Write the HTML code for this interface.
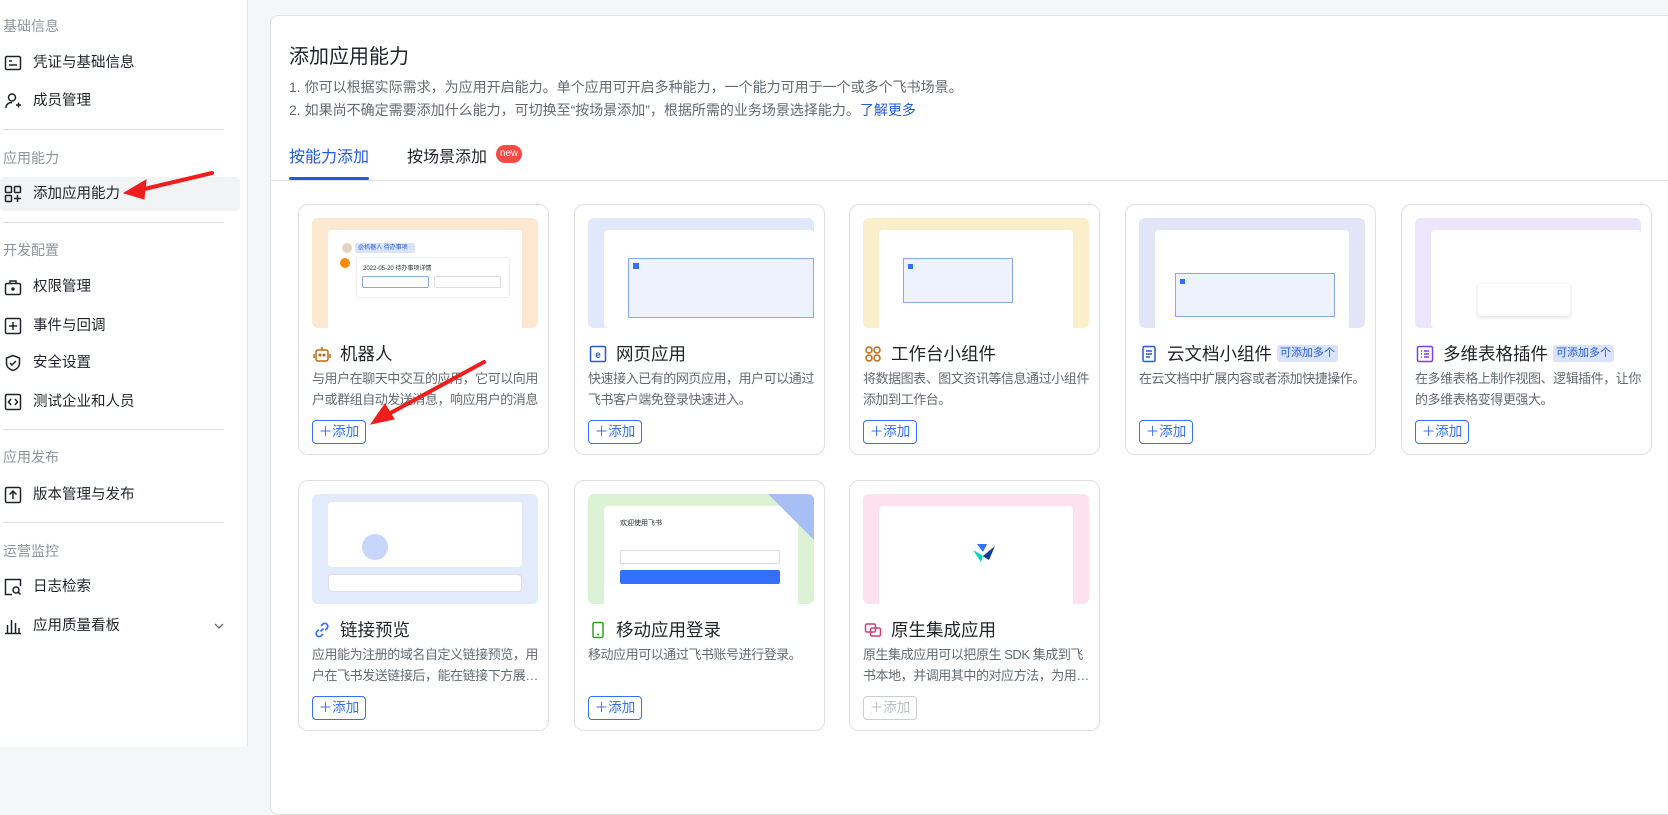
<!DOCTYPE html>
<html><head><meta charset="utf-8">
<style>
*{margin:0;padding:0;box-sizing:border-box}
body{width:1668px;height:747px;overflow:hidden;background:#f5f6f7;font-family:"Liberation Sans","Noto Sans CJK SC",sans-serif;color:#1f2329;position:relative}
.side{position:absolute;left:0;top:0;width:248px;height:747px;background:#fff;border-right:1px solid #e4e5e7}
.gl{position:absolute;left:3px;font-size:14px;color:#8f959e}
.it{position:absolute;left:0;width:240px;height:34px;font-size:14.5px;color:#1f2329;line-height:34px;padding-left:33px}
.it svg{position:absolute;left:4px;top:8px}
.it.act{background:#f2f3f5;border-radius:4px}
.dv{position:absolute;left:3px;width:221px;height:1px;background:#dee0e3}
.panel{position:absolute;left:270px;top:15px;width:1420px;height:800px;background:#fff;border:1px solid #dee0e3;border-radius:8px}
.card{position:absolute;width:251px;height:251px;border:1px solid #dee0e3;border-radius:10px;background:#fff}
.img{position:absolute;left:13px;top:13px;width:226px;height:110px;border-radius:6px;overflow:hidden}
.ct{position:absolute;left:14px;top:136px;font-size:17.5px;color:#1f2329;display:flex;align-items:center;white-space:nowrap}
.ct .ic{width:18px;height:18px;margin-right:9px;display:inline-block}
.tag{font-size:11px;background:#d9e3fc;color:#245bdb;padding:1px 3px;border-radius:3px;margin-left:5px;line-height:15px}
.cd{position:absolute;left:13px;top:164px;width:230px;font-size:13px;letter-spacing:-0.45px;line-height:20.5px;color:#646a73;display:-webkit-box;-webkit-line-clamp:2;-webkit-box-orient:vertical;overflow:hidden}
.btn{position:absolute;left:13px;top:215px;width:54px;height:24px;border:1px solid #3370ff;border-radius:4px;color:#3370ff;font-size:13.5px;line-height:22px;text-align:center;background:#fff}
.btn.dis{border-color:#c9cdd4;color:#bbbfc4}
.w{position:absolute;background:#fff;border-radius:4px}
</style></head><body>
<div class="side">
<div class="gl" style="top:16px">基础信息</div>
<div class="it" style="top:46px"><svg width="18" height="18" viewBox="0 0 18 18" fill="none" stroke="#1f2329" stroke-width="1.5"><rect x="1.5" y="2.5" width="15" height="13" rx="1.5"/><path d="M5 7h3M5 11h8"/></svg>凭证与基础信息</div>
<div class="it" style="top:84px"><svg width="18" height="18" viewBox="0 0 18 18" fill="none" stroke="#1f2329" stroke-width="1.5"><circle cx="8" cy="5.5" r="3.5"/><path d="M2 16c0-3.5 2.5-5.5 6-5.5M12 13h5M14.5 10.5v5"/></svg>成员管理</div>
<div class="dv" style="top:129px"></div>
<div class="gl" style="top:148px">应用能力</div>
<div class="it act" style="top:177px"><svg width="18" height="18" viewBox="0 0 18 18" fill="none" stroke="#1f2329" stroke-width="1.5"><rect x="1.5" y="1.5" width="6" height="6" rx="1"/><rect x="10.5" y="1.5" width="6" height="6" rx="1"/><rect x="1.5" y="10.5" width="6" height="6" rx="1"/><path d="M13.5 10v7M10 13.5h7"/></svg>添加应用能力</div>
<div class="dv" style="top:222px"></div>
<div class="gl" style="top:240px">开发配置</div>
<div class="it" style="top:270px"><svg width="18" height="18" viewBox="0 0 18 18" fill="none" stroke="#1f2329" stroke-width="1.5"><rect x="1.5" y="5.5" width="15" height="11" rx="1.5"/><path d="M6 5.5V3h6v2.5"/><circle cx="9" cy="11" r="1" fill="#1f2329"/></svg>权限管理</div>
<div class="it" style="top:309px"><svg width="18" height="18" viewBox="0 0 18 18" fill="none" stroke="#1f2329" stroke-width="1.5"><rect x="1.5" y="1.5" width="15" height="15" rx="1.5"/><path d="M9 5v8M5 9h8"/></svg>事件与回调</div>
<div class="it" style="top:346px"><svg width="18" height="18" viewBox="0 0 18 18" fill="none" stroke="#1f2329" stroke-width="1.5"><path d="M9 1.5l6.5 2.5v5c0 4-3 6.5-6.5 7.5C5.5 15.5 2.5 13 2.5 9V4z"/><path d="M6 9l2 2 4-4"/></svg>安全设置</div>
<div class="it" style="top:385px"><svg width="18" height="18" viewBox="0 0 18 18" fill="none" stroke="#1f2329" stroke-width="1.5"><rect x="1.5" y="1.5" width="15" height="15" rx="1.5"/><path d="M7 6L4.5 9 7 12M11 6l2.5 3L11 12"/></svg>测试企业和人员</div>
<div class="dv" style="top:429px"></div>
<div class="gl" style="top:447px">应用发布</div>
<div class="it" style="top:478px"><svg width="18" height="18" viewBox="0 0 18 18" fill="none" stroke="#1f2329" stroke-width="1.5"><rect x="1.5" y="1.5" width="15" height="15" rx="1.5"/><path d="M9 13V5M5.5 8.5L9 5l3.5 3.5"/></svg>版本管理与发布</div>
<div class="dv" style="top:522px"></div>
<div class="gl" style="top:541px">运营监控</div>
<div class="it" style="top:570px"><svg width="18" height="18" viewBox="0 0 18 18" fill="none" stroke="#1f2329" stroke-width="1.5"><path d="M8 16.5H1.5v-15h15V8"/><circle cx="12" cy="12" r="3"/><path d="M14.2 14.2l2.3 2.3"/></svg>日志检索</div>
<div class="it" style="top:609px"><svg width="18" height="18" viewBox="0 0 18 18" fill="none" stroke="#1f2329" stroke-width="1.5"><path d="M1 16.5h16M3.5 16V8M7.5 16V3M11.5 16V6M15 16v-5"/></svg>应用质量看板<svg style="left:214px;top:13px" width="10" height="8" viewBox="0 0 10 8" fill="none" stroke="#646a73" stroke-width="1.3"><path d="M1 2l4 4 4-4"/></svg></div>
</div>

<div class="panel">
<div style="position:absolute;left:18px;top:24px;font-size:20px">添加应用能力</div>
<div style="position:absolute;left:18px;top:60px;font-size:14px;color:#646a73;line-height:23px">1. 你可以根据实际需求，为应用开启能力。单个应用可开启多种能力，一个能力可用于一个或多个飞书场景。<br>2. 如果尚不确定需要添加什么能力，可切换至“按场景添加”，根据所需的业务场景选择能力。<span style="color:#245bdb">了解更多</span></div>
<div style="position:absolute;left:18px;top:127px;font-size:16px;color:#245bdb">按能力添加</div>
<div style="position:absolute;left:18px;top:161px;width:80px;height:3px;background:#245bdb;border-radius:2px"></div>
<div style="position:absolute;left:136px;top:127px;font-size:16px">按场景添加</div>
<div style="position:absolute;left:225px;top:129px;width:26px;height:18px;border-radius:9px;background:#f54a45;color:#fff;font-size:10px;line-height:18px;text-align:center">new</div>
<div style="position:absolute;left:0;top:164px;width:1420px;height:1px;background:#dee0e3"></div>
</div>

<!-- row 1 -->
<div class="card" style="left:298px;top:204px">
 <div class="img" style="background:#fde9d2"><div class="w" style="left:16px;top:12px;width:194px;height:98px;border-radius:4px 4px 0 0"></div>
 <div style="position:absolute;left:30px;top:25px;width:10px;height:10px;border-radius:50%;background:#e8d2c4"></div>
 <div style="position:absolute;left:43px;top:25px;width:60px;height:10px;background:#d9e3fc;border-radius:2px;font-size:6px;color:#245bdb;line-height:10px;padding-left:3px">@机器人 待办事项</div>
 <div style="position:absolute;left:28px;top:40px;width:10px;height:10px;border-radius:50%;background:#ff8800"></div>
 <div style="position:absolute;left:44px;top:39px;width:154px;height:41px;border:1px solid #eee;border-radius:3px;font-size:6px;padding:5px 0 0 6px">2022-05-20 待办事项详情</div>
 <div style="position:absolute;left:50px;top:58px;width:67px;height:12px;border:1px solid #8aa8f0;border-radius:2px"></div>
 <div style="position:absolute;left:122px;top:58px;width:67px;height:12px;border:1px solid #ddd;border-radius:2px"></div></div>
 <div class="ct"><svg class="ic" viewBox="0 0 18 18" fill="none" stroke="#c06b12" stroke-width="1.5"><rect x="3" y="5" width="12" height="11" rx="2"/><path d="M9 2v3M1 9v4M17 9v4"/><circle cx="7" cy="10" r=".8" fill="#c06b12"/><circle cx="11" cy="10" r=".8" fill="#c06b12"/></svg>机器人</div>
 <div class="cd">与用户在聊天中交互的应用，它可以向用户或群组自动发送消息，响应用户的消息</div>
 <div class="btn">＋添加</div>
</div>
<div class="card" style="left:574px;top:204px">
 <div class="img" style="background:#e1e8fb"><div class="w" style="left:16px;top:12px;width:210px;height:98px"></div><div style="position:absolute;left:40px;top:40px;width:186px;height:60px;border:1px solid #8aa8f0;background:#eef2fd"></div><div style="position:absolute;left:45px;top:45px;width:6px;height:6px;background:#3370ff"></div></div>
 <div class="ct"><svg class="ic" viewBox="0 0 18 18" fill="none" stroke="#245bdb" stroke-width="1.5"><rect x="1.5" y="1.5" width="15" height="15" rx="1.5"/><text x="9" y="13" font-size="10" text-anchor="middle" fill="#245bdb" stroke="none" font-weight="bold">e</text></svg>网页应用</div>
 <div class="cd">快速接入已有的网页应用，用户可以通过飞书客户端免登录快速进入。</div>
 <div class="btn">＋添加</div>
</div>
<div class="card" style="left:849px;top:204px">
 <div class="img" style="background:#fbeecb"><div class="w" style="left:16px;top:12px;width:194px;height:98px;border-radius:4px 4px 0 0"></div><div style="position:absolute;left:40px;top:40px;width:110px;height:45px;border:1px solid #8aa8f0;background:#eef2fd"></div><div style="position:absolute;left:45px;top:46px;width:5px;height:5px;background:#3370ff"></div></div>
 <div class="ct"><svg class="ic" viewBox="0 0 18 18" fill="none" stroke="#c06b12" stroke-width="1.5"><circle cx="5" cy="5" r="3"/><circle cx="13" cy="5" r="3"/><circle cx="5" cy="13" r="3"/><circle cx="13" cy="13" r="3"/></svg>工作台小组件</div>
 <div class="cd">将数据图表、图文资讯等信息通过小组件添加到工作台。</div>
 <div class="btn">＋添加</div>
</div>
<div class="card" style="left:1125px;top:204px">
 <div class="img" style="background:#e2e5f8"><div class="w" style="left:16px;top:12px;width:194px;height:98px;border-radius:4px 4px 0 0"></div><div style="position:absolute;left:36px;top:55px;width:160px;height:44px;border:1px solid #8aa8f0;background:#eef2fd"></div><div style="position:absolute;left:41px;top:61px;width:5px;height:5px;background:#3370ff"></div></div>
 <div class="ct"><svg class="ic" viewBox="0 0 18 18" fill="none" stroke="#245bdb" stroke-width="1.5"><rect x="3" y="1.5" width="12" height="15" rx="1.5"/><path d="M6 6h6M6 9h6M6 12h4"/></svg>云文档小组件<span class="tag">可添加多个</span></div>
 <div class="cd">在云文档中扩展内容或者添加快捷操作。</div>
 <div class="btn">＋添加</div>
</div>
<div class="card" style="left:1401px;top:204px">
 <div class="img" style="background:#ece5fb"><div class="w" style="left:16px;top:12px;width:210px;height:98px"></div><div style="position:absolute;left:63px;top:66px;width:92px;height:32px;background:#fff;box-shadow:0 1px 4px rgba(0,0,0,.15);border-radius:3px"></div></div>
 <div class="ct"><svg class="ic" viewBox="0 0 18 18" fill="none" stroke="#7f3bf5" stroke-width="1.5"><rect x="1.5" y="1.5" width="15" height="15" rx="1.5"/><path d="M5 6h1M8 6h5M5 9h1M8 9h5M5 12h1M8 12h5"/></svg>多维表格插件<span class="tag">可添加多个</span></div>
 <div class="cd">在多维表格上制作视图、逻辑插件，让你的多维表格变得更强大。</div>
 <div class="btn">＋添加</div>
</div>
<!-- row 2 -->
<div class="card" style="left:298px;top:480px">
 <div class="img" style="background:#e2eafb"><div class="w" style="left:16px;top:8px;width:194px;height:65px"></div><div class="w" style="left:16px;top:80px;width:194px;height:18px;border:1px solid #dde"></div><div style="position:absolute;left:50px;top:40px;width:26px;height:26px;border-radius:50%;background:#aec6fa;opacity:.7"></div></div>
 <div class="ct"><svg class="ic" viewBox="0 0 18 18" fill="none" stroke="#3370ff" stroke-width="1.7"><path d="M7.5 10.5l3-3M8 5l2-2a3 3 0 014.2 4.2l-2 2M10 13l-2 2a3 3 0 01-4.2-4.2l2-2"/></svg>链接预览</div>
 <div class="cd">应用能为注册的域名自定义链接预览，用户在飞书发送链接后，能在链接下方展示链接</div>
 <div class="btn">＋添加</div>
</div>
<div class="card" style="left:574px;top:480px">
 <div class="img" style="background:#dcf2d5"><div class="w" style="left:16px;top:12px;width:194px;height:98px;border-radius:4px 4px 0 0"></div><div style="position:absolute;left:180px;top:0;width:0;height:0;border-top:46px solid #a8bff5;border-left:46px solid transparent"></div>
 <div style="position:absolute;left:32px;top:24px;font-size:7px">欢迎使用飞书</div>
 <div style="position:absolute;left:32px;top:56px;width:160px;height:14px;border:1px solid #ddd;border-radius:2px"></div>
 <div style="position:absolute;left:32px;top:76px;width:160px;height:14px;background:#3370ff;border-radius:2px"></div></div>
 <div class="ct"><svg class="ic" viewBox="0 0 18 18" fill="none" stroke="#2ea121" stroke-width="1.5"><rect x="4" y="1.5" width="10" height="15" rx="1.5"/><path d="M8 13.5h2"/></svg>移动应用登录</div>
 <div class="cd">移动应用可以通过飞书账号进行登录。</div>
 <div class="btn">＋添加</div>
</div>
<div class="card" style="left:849px;top:480px">
 <div class="img" style="background:#fde2ee"><div class="w" style="left:16px;top:12px;width:194px;height:98px;border-radius:4px 4px 0 0"></div><svg style="position:absolute;left:110px;top:50px" width="22" height="18" viewBox="0 0 22 18"><path d="M0 6l10 6 12-10-6 14z" fill="#133c9a"/><path d="M0 6l10 6-2 6z" fill="#00d6b9"/><path d="M4 0h10l-4 8z" fill="#3370ff"/></svg></div>
 <div class="ct"><svg class="ic" viewBox="0 0 18 18" fill="none" stroke="#d13e7b" stroke-width="1.5"><rect x="1.5" y="3" width="10" height="8" rx="1.5"/><rect x="6.5" y="7" width="10" height="8" rx="1.5"/></svg>原生集成应用</div>
 <div class="cd">原生集成应用可以把原生 SDK 集成到飞书本地，并调用其中的对应方法，为用户提供</div>
 <div class="btn dis">＋添加</div>
</div>

<svg style="position:absolute;left:0;top:0" width="1668" height="747">
<g stroke="#f01d1d" stroke-width="4" stroke-linecap="round" fill="#f01d1d">
<path d="M212 173L140 190"/><path d="M124 193l22-13-2 19z" stroke-width="1"/>
<path d="M484 362L385 416"/><path d="M371 424l14-20 9 15z" stroke-width="1"/>
</g></svg>
</body></html>
